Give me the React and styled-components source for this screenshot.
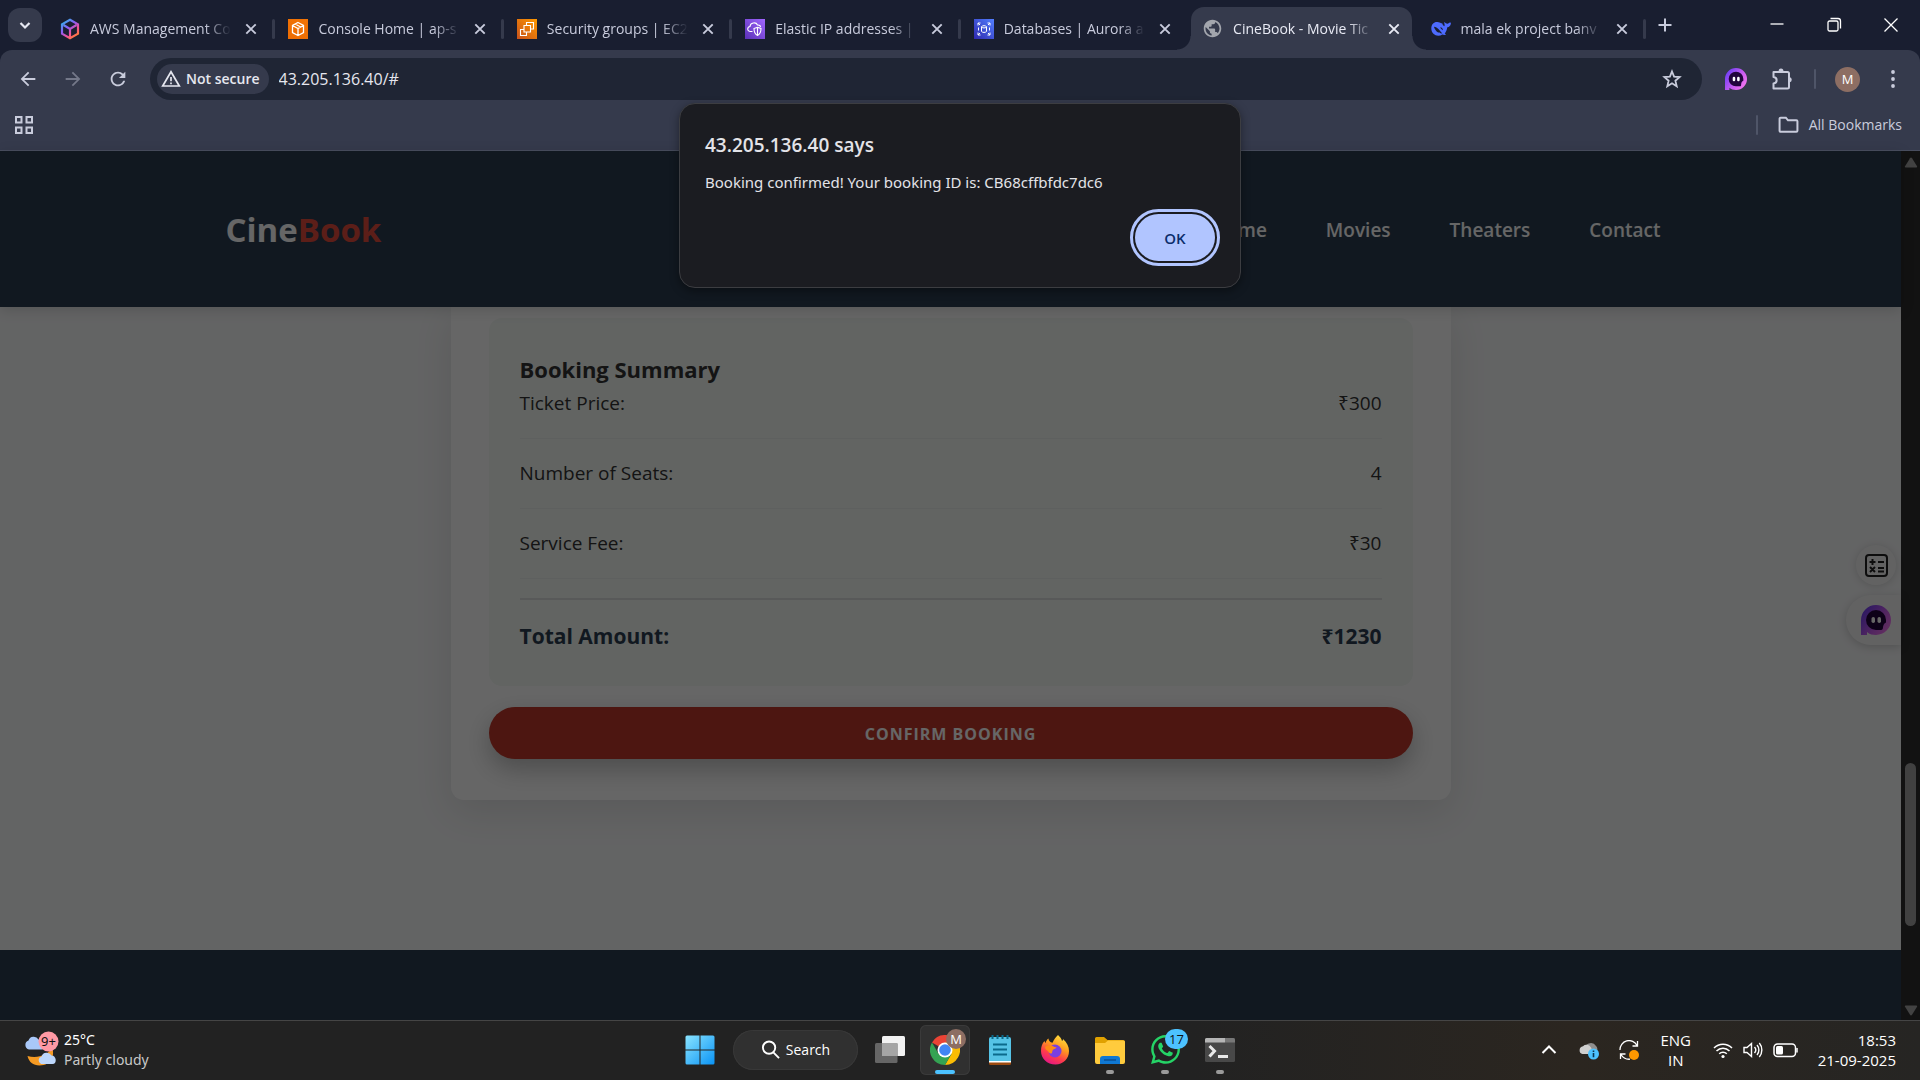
import React from "react";
import styled, { createGlobalStyle, css } from "styled-components";
import { MdArrowBack, MdArrowForward, MdRefresh, MdPublic } from "react-icons/md";
import { FaWhatsapp } from "react-icons/fa";

const Global = createGlobalStyle`
  *, *::before, *::after { box-sizing: border-box; }
  body { margin: 0; overflow: hidden; font-family: "Open Sans", "Noto Sans", sans-serif; }
  h1, h2, h3, p, dl, dd, dt, ul { margin: 0; padding: 0; }
  button { font-family: inherit; border: 0; padding: 0; background: none; color: inherit; }
  a { color: inherit; text-decoration: none; }
  svg { display: block; flex: none; }
`;

const Screen = styled.div`
  position: relative;
  display: flex;
  flex-direction: column;
  height: 100vh;
  overflow: hidden;
`;

/* ---------- tab strip ---------- */

const TabStrip = styled.div`
  display: flex;
  align-items: flex-end;
  height: 50px;
  padding: 0 1px 0 8px;
  background: #191e30;
  color: #c8cbdc;
`;

const TabSearch = styled.button`
  display: grid;
  place-items: center;
  width: 34px;
  height: 34px;
  margin: 0 7px 8px 0;
  border-radius: 12px;
  background: #353a4c;
  color: #e6e8f2;
`;

const TabList = styled.div`
  display: flex;
  flex: 0 1 1599px;
  min-width: 0;
`;

const TabSlot = styled.div`
  display: flex;
  align-items: center;
  flex: 1 1 0;
  min-width: 0;
  height: 43px;
`;

const Tab = styled.div`
  position: relative;
  display: flex;
  align-items: center;
  gap: 10px;
  flex: 1;
  min-width: 0;
  height: 43px;
  padding: 0 8px 0 11px;
  border-radius: 13px 13px 0 0;
  ${(p) =>
    p.$active &&
    css`
      background: #353a4c;
      color: #e8eaf4;
      &::before,
      &::after {
        content: "";
        position: absolute;
        bottom: 0;
        width: 14px;
        height: 14px;
      }
      &::before {
        left: -14px;
        background: radial-gradient(circle at 0 0, transparent 13px, #353a4c 14px);
      }
      &::after {
        right: -14px;
        background: radial-gradient(circle at 100% 0, transparent 13px, #353a4c 14px);
      }
    `}
`;

const TabTitle = styled.button`
  flex: 1;
  min-width: 0;
  overflow: hidden;
  white-space: nowrap;
  text-align: left;
  font-size: 14px;
  line-height: 20px;
  mask-image: linear-gradient(90deg, #000 calc(100% - 26px), transparent);
`;

const IconButton = styled.button`
  display: grid;
  place-items: center;
  flex: none;
  width: ${(p) => p.$w || 20}px;
  height: ${(p) => p.$h || 20}px;
`;

const TabDivider = styled.span`
  flex: none;
  width: 3px;
  height: 20px;
  margin: 0 2px 0 3px;
  border-radius: 2px;
  background: ${(p) => (p.$hidden ? "transparent" : "#353a4c")};
`;

const WindowControls = styled.div`
  display: flex;
  margin-left: auto;
  color: #fff;
`;

/* ---------- toolbar ---------- */

const ToolbarBack = styled.div`
  background: #191e30;
`;

const Toolbar = styled.div`
  border-radius: 12px 12px 0 0;
  background: #353a4c;
  border-bottom: 1px solid #494e5f;
  color: #c9ccdc;
`;

const AddressRow = styled.div`
  display: flex;
  align-items: center;
  height: 58px;
  padding-right: 5px;
`;

const NavButtons = styled.div`
  display: flex;
  width: 150px;
  padding-left: 5px;
`;

const Omnibox = styled.div`
  display: flex;
  align-items: center;
  flex: 1;
  height: 42px;
  padding: 0 7px;
  border-radius: 21px;
  background: #1f2534;
`;

const SecurityChip = styled.button`
  display: flex;
  align-items: center;
  gap: 5px;
  height: 30px;
  padding: 0 9px 0 4px;
  border-radius: 15px;
  background: #353a4c;
  color: #e6e7ef;
  font-size: 14px;
  font-weight: 600;
  line-height: 20px;
  white-space: nowrap;
`;

const UrlInput = styled.input`
  flex: 1;
  min-width: 0;
  margin-left: 10px;
  padding: 0;
  border: 0;
  outline: 0;
  background: none;
  color: #e6e7ef;
  font: 16px/22px "Open Sans", "Noto Sans", sans-serif;
`;

const Actions = styled.div`
  display: flex;
  align-items: center;
  padding-left: 11px;
`;

const Bar = styled.span`
  width: 2px;
  height: 20px;
  background: #4f5568;
  border-radius: 1px;
`;

const Avatar = styled.span`
  display: grid;
  place-items: center;
  width: 25px;
  height: 25px;
  border-radius: 50%;
  background: #8d6e63;
  color: #fff;
  font-size: 13px;
  line-height: 18px;
`;

const BookmarksRow = styled.div`
  display: flex;
  align-items: center;
  justify-content: space-between;
  height: 42px;
  padding: 0 18px 9px 14px;
`;

const AllBookmarks = styled.div`
  display: flex;
  align-items: center;
  gap: 20px;
`;

const FolderButton = styled.button`
  display: flex;
  align-items: center;
  gap: 10px;
  font-size: 14px;
  line-height: 20px;
`;

/* ---------- web page ---------- */

const Viewport = styled.div`
  position: relative;
  display: flex;
  flex: 1;
  min-height: 0;
`;

const Page = styled.div`
  display: flex;
  flex-direction: column;
  flex: 1;
  min-width: 0;
  background: #f8f9fa;
  color: #333;
`;

const SiteHeader = styled.header`
  position: relative;
  z-index: 1;
  background: #2c3e50;
  box-shadow: 0 3px 13px rgba(0, 0, 0, 0.15);
`;

const HeaderInner = styled.div`
  display: flex;
  align-items: center;
  justify-content: space-between;
  max-width: 1500px;
  height: 156px;
  margin: 0 auto;
  padding: 2px 25px 0;
`;

const Logo = styled.h1`
  font-size: 33px;
  line-height: 44px;
  font-weight: 700;
  color: #fff;
  span {
    color: #e74c3c;
  }
`;

const SiteNav = styled.nav`
  display: flex;
  gap: 29px;
  font-size: 19px;
  line-height: 28px;
  font-weight: 600;
  color: #fff;
  a {
    padding: 0 15px;
  }
`;

const Main = styled.main`
  padding: 0 25px 150px;
`;

const Card = styled.section`
  max-width: 1000px;
  margin: 0 auto;
  padding: 11px 38px 41px;
  border-radius: 0 0 13px 13px;
  background: #fff;
  box-shadow: 0 12px 38px rgba(0, 0, 0, 0.1);
`;

const Summary = styled.div`
  padding: 32px 31px 35px;
  border-radius: 13px;
  background: #f4f9f5;
`;

const SummaryTitle = styled.h3`
  font-size: 22px;
  line-height: 38px;
  font-weight: 700;
`;

const SummaryRow = styled.div`
  display: flex;
  justify-content: space-between;
  padding-bottom: 20px;
  margin-bottom: 19px;
  border-bottom: 1px solid #ecf0ee;
  font-size: 19px;
  line-height: 30px;
  &:last-of-type {
    margin-bottom: 0;
    padding: 21px 0 0;
    border-top: 2px solid #dcdfde;
    border-bottom: 0;
    color: #2c3e50;
    font-size: 21px;
    font-weight: 700;
  }
`;

const ConfirmButton = styled.button`
  display: block;
  width: 100%;
  height: 52px;
  margin-top: 21px;
  padding-top: 1px;
  border-radius: 26px;
  background: #c0392b;
  box-shadow: 0 10px 25px rgba(0, 0, 0, 0.25);
  color: #fff;
  font-size: 16px;
  line-height: 24px;
  font-weight: 700;
  letter-spacing: 1px;
  text-transform: uppercase;
`;

const SiteFooter = styled.footer`
  flex: 1;
  background: #2c3e50;
`;

const Scrollbar = styled.div`
  display: flex;
  flex-direction: column;
  align-items: center;
  justify-content: space-between;
  width: 19px;
  padding: 6px 0 4px;
  background: #2d2d2d;
  color: #a5a5a5;
`;

const Thumb = styled.span`
  width: 11px;
  height: 163px;
  margin-top: 515px;
  border-radius: 6px;
  background: #a2a2a2;
`;

const Widgets = styled.div`
  position: absolute;
  right: 19px;
  top: 394px;
  display: flex;
  flex-direction: column;
  align-items: flex-end;
  gap: 10px;
`;

const WidgetRound = styled.button`
  display: grid;
  place-items: center;
  width: 40px;
  height: 40px;
  margin-right: 5px;
  border-radius: 50%;
  background: #f6f6f6;
  box-shadow: 0 1px 8px rgba(0, 0, 0, 0.15);
`;

const WidgetPill = styled.button`
  display: flex;
  align-items: center;
  width: 55px;
  height: 50px;
  padding-left: 15px;
  border-radius: 25px 0 0 25px;
  background: #f6f6f6;
  box-shadow: 0 2px 10px rgba(0, 0, 0, 0.18);
`;

const Scrim = styled.div`
  position: absolute;
  inset: 0;
  z-index: 2;
  background: rgba(0, 0, 0, 0.6);
`;

/* ---------- alert ---------- */

const AlertLayer = styled.div`
  position: absolute;
  inset: 103px 0 auto;
  z-index: 3;
  display: flex;
  justify-content: center;
`;

const Alert = styled.div`
  display: flex;
  flex-direction: column;
  width: 562px;
  padding: 26px 25px;
  border: 1px solid #3c3d41;
  border-radius: 16px;
  background: #1b1c21;
  box-shadow: 0 3px 10px rgba(0, 0, 0, 0.4);
  color: #e3e3e8;
`;

const AlertTitle = styled.h2`
  font-size: 19px;
  line-height: 30px;
  font-weight: 600;
`;

const AlertText = styled.p`
  margin-top: 11px;
  font-family: "Noto Sans", "Open Sans", sans-serif;
  font-size: 15px;
  line-height: 22px;
`;

const OkButton = styled.button`
  align-self: flex-end;
  width: 80px;
  height: 47px;
  margin-top: 21px;
  border-radius: 24px;
  background: #b1c5ff;
  color: #0b2d6b;
  font-size: 15px;
  line-height: 20px;
  font-weight: 600;
  outline: 3px solid #b1c5ff;
  outline-offset: 2px;
`;

/* ---------- taskbar ---------- */

const Taskbar = styled.footer`
  display: grid;
  grid-template-columns: 1fr auto 1fr;
  align-items: center;
  height: 60px;
  padding-bottom: 2px;
  border-top: 1px solid #454545;
  background: linear-gradient(90deg, #222 0%, #222 62%, #2b2620 82%, #262523 100%);
  color: #fff;
  font-size: 15px;
  line-height: 20px;
`;

const Weather = styled.button`
  display: flex;
  align-items: center;
  gap: 5px;
  margin-left: 24px;
  justify-self: start;
  text-align: left;
  font-family: "Noto Sans", "Open Sans", sans-serif;
  font-size: 14px;
  line-height: 20px;
  span {
    display: block;
  }
  span + span {
    color: #c8c8c8;
  }
`;

const Apps = styled.div`
  display: flex;
  align-items: center;
  gap: 5px;
`;

const AppButton = styled.button`
  position: relative;
  display: grid;
  place-items: center;
  width: 50px;
  height: 50px;
  border-radius: 6px;
  ${(p) => p.$active && "background: #303030; box-shadow: inset 0 0 0 1px #3a3a3a;"}
  &::after {
    content: "";
    position: absolute;
    bottom: 1px;
    left: 50%;
    width: ${(p) => (p.$active ? 20 : 8)}px;
    height: 4px;
    margin-left: ${(p) => (p.$active ? -10 : -4)}px;
    border-radius: 2px;
    background: ${(p) => (p.$active ? "#4cc2ff" : p.$running ? "#9a9a9a" : "transparent")};
  }
`;

const Badge = styled.span`
  position: absolute;
  top: 4px;
  right: ${(p) => (p.$wide ? 2 : 4)}px;
  display: grid;
  place-items: center;
  width: ${(p) => (p.$wide ? 23 : 20)}px;
  height: 20px;
  border-radius: 10px;
  background: ${(p) => p.$bg};
  color: ${(p) => p.$fg};
  font-size: 13px;
  line-height: 20px;
`;

const SearchPill = styled.button`
  display: flex;
  align-items: center;
  justify-content: center;
  gap: 6px;
  width: 125px;
  height: 40px;
  margin: 0 2px 0 3px;
  border-radius: 20px;
  background: #303030;
  box-shadow: inset 0 0 0 1px #383838;
  color: #fff;
  font-size: 14px;
  line-height: 20px;
`;

const Tray = styled.div`
  display: flex;
  align-items: center;
  justify-self: end;
  gap: 20px;
  padding-right: 24px;
`;

const TrayGroup = styled.div`
  display: flex;
  gap: 10px;
`;

const Stack = styled.div`
  min-width: ${(p) => p.$min || 0}px;
  text-align: ${(p) => p.$align};
  span {
    display: block;
  }
`;

/* ---------- drawings ---------- */

const Line = ({ size = 20, w = 2, children, ...rest }) => (
  <svg width={size} height={size} viewBox="0 0 20 20" fill="none" stroke="currentColor" strokeWidth={w} {...rest}>
    {children}
  </svg>
);

const Cross = () => (
  <Line size={20} w={1.9}>
    <path d="M5.3 5.3l9.4 9.4M14.7 5.3l-9.4 9.4" />
  </Line>
);

const AwsCube = () => (
  <svg width="20" height="24" viewBox="0 0 20 24" fill="none" strokeWidth="2.2">
    <defs>
      <linearGradient id="aws" x1="0" y1="0" x2="0.7" y2="1">
        <stop offset="0" stopColor="#1fc4e8" />
        <stop offset="0.45" stopColor="#8b5cf6" />
        <stop offset="0.75" stopColor="#f0509a" />
        <stop offset="1" stopColor="#ff7a3c" />
      </linearGradient>
    </defs>
    <path stroke="url(#aws)" d="M10 2.800l8 4.600v9.200l-8 4.600-8-4.600V7.400zM3.500 8L10 12l6.500-4M10 12v8" />
  </svg>
);

const Fav = ({ a, b, id, w = 1.3, children }) => (
  <svg width="20" height="24" viewBox="0 0 20 24" fill="none" stroke="#fff" strokeWidth={w}>
    <defs>
      <linearGradient id={id} x1="0" y1="1" x2="1" y2="0">
        <stop offset="0" stopColor={a} />
        <stop offset="1" stopColor={b} />
      </linearGradient>
    </defs>
    <rect x="0" y="2" width="20" height="20" fill={`url(#${id})`} stroke="none" />
    {children}
  </svg>
);

const ConsoleFav = () => (
  <Fav id="f1" a="#ed6c02" b="#f27405">
    <path d="M10 5.500l5.500 3v7L10 18.500l-5.500-3v-7zM4.500 8.500L10 11.500l5.500-3M10 11.500v7M7.200 7l5.500 3" />
  </Fav>
);
const Ec2Fav = () => (
  <Fav id="f2" a="#c8511b" b="#ff9900" w={1.1}>
    <path d="M9.500 8V5.500h7V12H14M7 8.500h6.500V15H7zM9.500 15v3.500H3.500v-6H7" />
  </Fav>
);
const VpcFav = () => (
  <Fav id="f3" a="#5a30b5" b="#a166ff" w={1.1}>
    <path d="M7.500 14.500H5.500a2.500 2.500 0 01-.5-5c.2-3.800 6-5 7.500-1.500 2-.2 3 .8 3 2M9 11.500l3.500-1.200 3.500 1.200c0 4-1.200 5.800-3.500 7-2.300-1.200-3.500-3-3.500-7zM12.500 11v7" />
  </Fav>
);
const RdsFav = () => (
  <Fav id="f4" a="#2e27ad" b="#527fff" w={1}>
    <path d="M4 8.500V6h2.500M4 6l2 2M16 8.500V6h-2.500M16 6l-2 2M4 15.500V18h2.500M4 18l2-2M16 15.500V18h-2.500M16 18l-2-2M4.500 10.500v3M15.500 10.500v3" />
    <path d="M7.500 9.800v4.500c0 1.500 5 1.500 5 0V9.800c0-1.500-5-1.500-5 0zc0 1.500 5 1.500 5 0" />
  </Fav>
);
const Whale = () => (
  <svg width="20" height="20" viewBox="0 0 20 20">
    <path
      fill="#4d6bfe"
      d="M.3 9.300C.3 5 3.300 2.600 6.500 3c1.600.2 2.600.8 3.500 1.200 1-.2 1.600 0 1.500.7-.1.700.8 1.500 1.900 2.300.4-.9.200-2.100-.2-3.200-.3-.8.200-1 .8-.5.700.7 1.400 1.300 2.400 1.200 1-.1 1.500-.8 2.600-1.200.7-.2 1 .2.900.9-.3 2.100-1.500 3.500-3.600 3.800-.3 2.500-1.300 4.700-2.600 6.200.6.400 1.100.5 1.400.9-.7.900-2.400.9-3.700.2C7.100 18.200.300 16.300.300 9.300z"
    />
    <path fill="#191e30" d="M3 7.700c3.800.4 5.200 3.600 8.300 6.600-1.100.3-2-.1-2.700-.9-1 1-4.800-1.900-5.600-5.700zM9.300 8.200c1.500.2 2.700 1.300 2.600 3-.8-.4-2.500-1.700-2.600-3z" />
  </svg>
);

const Puzzle = () => (
  <svg width="22" height="24" viewBox="0 0 22 24" fill="none" stroke="currentColor" strokeWidth="2" strokeLinejoin="round">
    <path d="M2.500 5h14a1.500 1.500 0 011.500 1.500V20a1.500 1.500 0 01-1.500 1.500h-14V16.500c4.200-.4 4.200-6.100 0-6.500z" />
    <path fill="currentColor" stroke="none" d="M7.500 4.500a2.500 3 0 015 0zM18.500 10a2.800 2.800 0 010 5.500z" />
  </svg>
);

const GhostIcon = ({ id, size }) => (
  <svg width={size} height={size} viewBox="0 0 30 30">
    <defs>
      <linearGradient id={id} x1="0" y1="0.200" x2="1" y2="0.900">
        <stop offset="0" stopColor="#6a3df5" />
        <stop offset="0.550" stopColor="#c95cf0" />
        <stop offset="1" stopColor="#ff7bf0" />
      </linearGradient>
    </defs>
    <path fill={`url(#${id})`} d="M15 0a15 15 0 110 30c-3.500 0-6.500-.6-9-3v3H0V15A15 15 0 0115 0z" />
    <path fill="#22043d" d="M15 5a10 10 0 0110 10v2.500c-2 1-2.500 2-3 4.500 0 2-.5 3-2 3h-5A10 10 0 0115 5z" />
    <rect x="10.500" y="12" width="3.500" height="6" rx="1.700" fill="#fff" />
    <rect x="16.500" y="12" width="3.500" height="6" rx="1.700" fill="#fff" />
  </svg>
);

const ChromeLogo = () => (
  <svg width="30" height="30" viewBox="0 0 30 30">
    <path fill="#ea4335" d="M15 15L2 7.500A15 15 0 0128 7.500H15z" />
    <path fill="#fbbc04" d="M15 15V7.500h13A15 15 0 0115 30l6.500-11.200z" />
    <path fill="#34a353" d="M2 7.500A15 15 0 0015 30l6.500-11.200L15 22 8.500 18.800z" />
    <circle cx="15" cy="15" r="7.500" fill="#fff" />
    <circle cx="15" cy="15" r="5.800" fill="#4285f4" />
  </svg>
);

const FirefoxLogo = () => (
  <svg width="30" height="30" viewBox="0 0 30 30">
    <defs>
      <linearGradient id="ff" x1="0.800" y1="0" x2="0.300" y2="1">
        <stop offset="0" stopColor="#ffe742" />
        <stop offset="0.400" stopColor="#ff9a1f" />
        <stop offset="0.700" stopColor="#ff3d4a" />
        <stop offset="1" stopColor="#e31587" />
      </linearGradient>
    </defs>
    <path
      fill="url(#ff)"
      d="M18 0c2 2 3.500 3.500 4 6 1-.5 1-1.500 1-2 4 3.500 6 7.500 6 12 0 8-6 13.500-13.500 13.500C7 29.500 1 23.500 1 16c0-4 1-7.500 3.500-10 .3 1 .7 1.600 1.200 2C6 6 7 4.500 8.500 3.500c0 2 1.500 4 4 4.300C14 4.500 15.500 2.500 18 0z"
    />
    <circle cx="15" cy="16" r="6.500" fill="#7a3fe0" />
    <path fill="#ff8a16" d="M5 12c3-2.500 6-2 8.500-.5 1.500 1 3 .5 3 .5-.5 2-2.500 2-3.500 2.800-1 1.200-.5 3-1.500 3.700-1.500.5-3-1-3.500-2.500C6.500 15 5 14 5 12z" />
  </svg>
);

const tabs = [
  { title: "AWS Management Co", icon: <AwsCube /> },
  { title: "Console Home | ap-s", icon: <ConsoleFav /> },
  { title: "Security groups | EC2", icon: <Ec2Fav /> },
  { title: "Elastic IP addresses | ", icon: <VpcFav /> },
  { title: "Databases | Aurora a", icon: <RdsFav />, noDivider: true },
  { title: "CineBook - Movie Tic", icon: <MdPublic size={21} color="#a3a6ad" />, active: true, noDivider: true },
  { title: "mala ek project banv", icon: <Whale /> },
];

const rows = [
  ["Ticket Price:", "₹300"],
  ["Number of Seats:", "4"],
  ["Service Fee:", "₹30"],
  ["Total Amount:", "₹1230"],
];

export default function App() {
  return (
    <Screen>
      <Global />
      <TabStrip>
        <TabSearch aria-label="Search tabs">
          <Line size={20} w={2.2}><path d="M5.500 8l4.500 4.500L14.500 8" /></Line>
        </TabSearch>
        <TabList>
          {tabs.map((t) => (
            <TabSlot key={t.title}>
              <Tab $active={t.active}>
                {t.icon}
                <TabTitle>{t.title}</TabTitle>
                <IconButton aria-label="Close tab"><Cross /></IconButton>
              </Tab>
              <TabDivider $hidden={t.noDivider} />
            </TabSlot>
          ))}
        </TabList>
        <IconButton $w={34} $h={50} aria-label="New tab">
          <Line><path d="M10 3.500v13M3.500 10h13" /></Line>
        </IconButton>
        <WindowControls>
          <IconButton $w={57} $h={50} aria-label="Minimize"><Line w={1.300}><path d="M3.500 9h13" /></Line></IconButton>
          <IconButton $w={57} $h={50} aria-label="Restore">
            <Line w={1.300}><rect x="4" y="6" width="10" height="10" rx="1.500" /><path d="M6.500 3.500h7.500a2.500 2.500 0 012.500 2.500v7.500" /></Line>
          </IconButton>
          <IconButton $w={57} $h={50} aria-label="Close"><Line w={1.300}><path d="M3.500 3.500l13 13M16.500 3.500l-13 13" /></Line></IconButton>
        </WindowControls>
      </TabStrip>

      <ToolbarBack>
        <Toolbar>
          <AddressRow>
            <NavButtons>
              <IconButton $w={45} $h={40} aria-label="Back"><MdArrowBack size={22} /></IconButton>
              <IconButton $w={45} $h={40} aria-label="Forward"><MdArrowForward size={22} color="#747889" /></IconButton>
              <IconButton $w={45} $h={40} aria-label="Reload"><MdRefresh size={22} /></IconButton>
            </NavButtons>
            <Omnibox>
              <SecurityChip>
                <Line size={20} w={1.700}><path d="M10 2.800L18.300 17H1.700zM10 8v4.200M10 13.500v1.800" /></Line>
                Not secure
              </SecurityChip>
              <UrlInput aria-label="Address" defaultValue="43.205.136.40/#" />
              <IconButton $w={46} $h={40} aria-label="Bookmark this page">
                <Line size={20} w={1.800}><path d="M10 2.500l2.100 5.200 5.500.4-4.200 3.600 1.300 5.500-4.700-3-4.700 3 1.300-5.500-4.200-3.600 5.500-.4z" /></Line>
              </IconButton>
            </Omnibox>
            <Actions>
              <IconButton $w={46} $h={40} aria-label="Assistant"><GhostIcon id="g1" size={22} /></IconButton>
              <IconButton $w={46} $h={40} aria-label="Extensions"><Puzzle /></IconButton>
              <IconButton as="span" $w={20} $h={40}><Bar /></IconButton>
              <IconButton $w={45} $h={40} aria-label="Profile"><Avatar>M</Avatar></IconButton>
              <IconButton $w={45} $h={40} aria-label="Menu">
                <Line><g fill="currentColor" stroke="none"><circle cx="10" cy="3" r="1.900" /><circle cx="10" cy="10" r="1.900" /><circle cx="10" cy="17" r="1.900" /></g></Line>
              </IconButton>
            </Actions>
          </AddressRow>
          <BookmarksRow>
            <IconButton aria-label="Apps">
              <Line><path d="M2 2h5.500v5.500H2zM12.500 2H18v5.500h-5.500zM2 12.500h5.500V18H2zM12.500 12.500H18V18h-5.500z" /></Line>
            </IconButton>
            <AllBookmarks>
              <Bar />
              <FolderButton>
                <Line size={21} w={1.900}><path d="M1.500 4.500a1 1 0 011-1h5l2 2.500h8a1 1 0 011 1v9a1 1 0 01-1 1h-15a1 1 0 01-1-1z" /></Line>
                All Bookmarks
              </FolderButton>
            </AllBookmarks>
          </BookmarksRow>
        </Toolbar>
      </ToolbarBack>

      <Viewport>
        <Page>
          <SiteHeader>
            <HeaderInner>
              <Logo>Cine<span>Book</span></Logo>
              <SiteNav>
                <a href="#home">Home</a>
                <a href="#movies">Movies</a>
                <a href="#theaters">Theaters</a>
                <a href="#contact">Contact</a>
              </SiteNav>
            </HeaderInner>
          </SiteHeader>
          <Main>
            <Card>
              <Summary>
                <SummaryTitle>Booking Summary</SummaryTitle>
                {rows.map(([label, value]) => (
                  <SummaryRow key={label}><span>{label}</span><span>{value}</span></SummaryRow>
                ))}
              </Summary>
              <ConfirmButton>Confirm Booking</ConfirmButton>
            </Card>
          </Main>
          <SiteFooter />
        </Page>
        <Scrollbar>
          <svg width="14" height="11" viewBox="0 0 14 11"><path fill="currentColor" d="M6 1.200a1.200 1.200 0 012 0l5 8c.4.700 0 1.300-.7 1.300H1.700c-.7 0-1.100-.6-.7-1.300z" /></svg>
          <Thumb />
          <svg width="14" height="11" viewBox="0 0 14 11"><path fill="currentColor" d="M6 9.800a1.200 1.200 0 002 0l5-8C13.400 1.100 13 .5 12.300.5H1.700C1 .5.600 1.100 1 1.800z" /></svg>
        </Scrollbar>
        <Widgets>
          <WidgetRound aria-label="Calculator">
            <svg width="23" height="23" viewBox="0 0 23 23" fill="none" stroke="#222" strokeWidth="2">
              <rect x="1" y="1" width="21" height="21" rx="3" />
              <path d="M4.500 8h6M7.500 5v6M13 8h6M5 13l5 5M10 13l-5 5M13 14h6M13 17.500h6" />
            </svg>
          </WidgetRound>
          <WidgetPill aria-label="Open assistant"><GhostIcon id="g2" size={30} /></WidgetPill>
        </Widgets>
        <Scrim />
      </Viewport>

      <AlertLayer>
        <Alert role="alertdialog" aria-labelledby="alert-title" aria-describedby="alert-text">
          <AlertTitle id="alert-title">43.205.136.40 says</AlertTitle>
          <AlertText id="alert-text">Booking confirmed! Your booking ID is: CB68cffbfdc7dc6</AlertText>
          <OkButton>OK</OkButton>
        </Alert>
      </AlertLayer>

      <Taskbar>
        <Weather>
          <svg width="35" height="38" viewBox="0 0 35 38">
            <path fill="#f59a23" d="M28 17c3 6 0 17.500-12.500 17.500C9 34.500 5 31 3.500 25c10 3 20-1 24.500-8z" />
            <path fill="#a9c8f8" d="M5 18.500a4.700 4.700 0 01-.5-9 5.500 5.500 0 0110-1 6 6 0 014 10z" />
            <path fill="#bcd6fb" d="M17 33a4 4 0 01.5-7.500 5.500 5.500 0 0110-1c5 0 6 8.500 1 8.500z" />
            <circle cx="24.500" cy="10.500" r="10" fill="#ff99a4" />
            <text x="24.500" y="15" fontSize="13" textAnchor="middle" fill="#111">9+</text>
          </svg>
          <div><span>25°C</span><span>Partly cloudy</span></div>
        </Weather>

        <Apps>
          <AppButton aria-label="Start">
            <svg width="30" height="30" viewBox="0 0 30 30">
              <defs><linearGradient id="win" x1="0" y1="0" x2="1" y2="1"><stop offset="0" stopColor="#8ae4ff" /><stop offset="1" stopColor="#0a93f5" /></linearGradient></defs>
              <path fill="url(#win)" d="M2 .5h12.500v14H.500V2A1.500 1.500 0 012 .5zM15.500.500H28A1.500 1.500 0 0129.500 2v12.500h-14zM.5 15.500h14v14H2A1.500 1.500 0 01.500 28zM15.500 15.500h14V28a1.500 1.500 0 01-1.500 1.500H15.500z" />
            </svg>
          </AppButton>
          <SearchPill>
            <Line size={19} w={2}><circle cx="8.500" cy="8" r="6.500" /><path d="M13 13l6 6" /></Line>
            Search
          </SearchPill>
          <AppButton aria-label="Task view">
            <svg width="30" height="30" viewBox="0 0 30 30">
              <rect x="7" y="1" width="23" height="20" rx="1.500" fill="#f2f2f2" />
              <rect x="0" y="8" width="22.500" height="20" rx="1.500" fill="#666" />
              <path d="M7 8h15.500v13H7z" fill="#a5a5a5" />
            </svg>
          </AppButton>
          <AppButton $active aria-label="Chrome"><ChromeLogo /><Badge $bg="#8d6e63" $fg="#fff">M</Badge></AppButton>
          <AppButton aria-label="Notepad">
            <svg width="22" height="30" viewBox="0 0 22 30">
              <path fill="#9a4a10" d="M0 26h22v2.500a1.500 1.500 0 01-1.500 1.500h-19A1.500 1.500 0 010 28.500z" />
              <path fill="#fff" d="M0 24h22v3.500H0z" />
              <path fill="#55c3e6" d="M0 4a2 2 0 012-2h18a2 2 0 012 2v22H0z" />
              <path stroke="#0b6a8c" strokeWidth="2" d="M4 9.500h14M4 14.500h14M4 19.500h14M3.500 0v4M8.500 0v4M13.500 0v4M18.500 0v4" />
            </svg>
          </AppButton>
          <AppButton aria-label="Firefox"><FirefoxLogo /></AppButton>
          <AppButton $running aria-label="File Explorer">
            <svg width="30" height="28" viewBox="0 0 30 28">
              <path fill="#e0a100" d="M0 2.500A1.500 1.500 0 011.500 1H9l3.500 3H28a2 2 0 012 2v6H0z" />
              <path fill="#ffcb3d" d="M0 7h10l3-2.500h15.500A1.500 1.500 0 0130 6v20a2 2 0 01-2 2H2a2 2 0 01-2-2z" />
              <path fill="#0f78d4" d="M5 28v-5a3 3 0 013-3h14a3 3 0 013 3v5z" />
              <path stroke="#0a4f96" strokeWidth="1.500" d="M9 24h12" />
            </svg>
          </AppButton>
          <AppButton $running aria-label="WhatsApp"><FaWhatsapp size={33} color="#25d366" /><Badge $wide $bg="#4cc2ff" $fg="#111">17</Badge></AppButton>
          <AppButton $running aria-label="Terminal">
            <svg width="30" height="24" viewBox="0 0 30 24" fill="none">
              <rect width="30" height="24" rx="1.500" fill="#484848" />
              <path fill="#b5b5b5" d="M1.500 0H20v4.500H0v-3A1.500 1.500 0 011.500 0z" />
              <path fill="#777" d="M20 0h8.500A1.500 1.500 0 0130 1.500v3H20z" />
              <path stroke="#e8e8e8" strokeWidth="3" d="M4.500 8l5 5-5 5.500M13 18.500h10" />
            </svg>
          </AppButton>
        </Apps>

        <Tray>
          <IconButton aria-label="Show hidden icons"><Line size={20} w={2}><path d="M3.500 13L10 6.500l6.500 6.500" /></Line></IconButton>
          <svg width="20" height="20" viewBox="0 0 20 20">
            <path fill="#8f8f8f" d="M6 8a6 6 0 0111-2c2 2 2 6-1 7z" />
            <path fill="#cfcfcf" d="M3.500 14a4 4 0 01.500-7.800 5 5 0 018 1.300L15 14z" />
            <circle cx="14.500" cy="14" r="5.500" fill="#4cc2ff" />
            <path stroke="#0b3550" strokeWidth="1.600" d="M14.500 10.500v1.600M14.500 13v4.200" />
          </svg>
          <svg width="20" height="20" viewBox="0 0 20 20" fill="none" stroke="#fff" strokeWidth="1.300">
            <path d="M1 10a9 9 0 0117-4.500M18.500 1v5h-5M1.500 19v-5h5M2 14.500c2 3.500 5 5 9 4.700" />
            <circle cx="15" cy="15" r="5" fill="#ff9800" stroke="none" />
          </svg>
          <Stack $align="center" $min={34}><span>ENG</span><span>IN</span></Stack>
          <TrayGroup>
            <Line size={20} w={1.500}>
              <path d="M1 8a12.500 12.500 0 0118 0M3.500 11a9 9 0 0113 0M6.200 13.700a5.500 5.500 0 017.600 0" />
              <circle cx="10" cy="16.500" r="1.600" fill="currentColor" stroke="none" />
            </Line>
            <Line size={20} w={1.400}>
              <path d="M1 7.500v5h3l4.500 4v-13L4 7.500zM11.500 7c1.500 1.700 1.500 4.300 0 6M14 5c2.500 2.800 2.500 7.200 0 10M16.300 3c3.400 4 3.400 10 0 14" />
            </Line>
            <svg width="25" height="20" viewBox="0 0 25 20" fill="none" stroke="#fff" strokeWidth="1.500">
              <rect x="1" y="4" width="21.500" height="12.500" rx="3.500" />
              <path d="M24 8v4.500" />
              <rect x="3" y="6" width="7" height="8.500" rx="1.500" fill="#fff" stroke="none" />
            </svg>
          </TrayGroup>
          <Stack $align="right"><span>18:53</span><span>21-09-2025</span></Stack>
        </Tray>
      </Taskbar>
    </Screen>
  );
}
